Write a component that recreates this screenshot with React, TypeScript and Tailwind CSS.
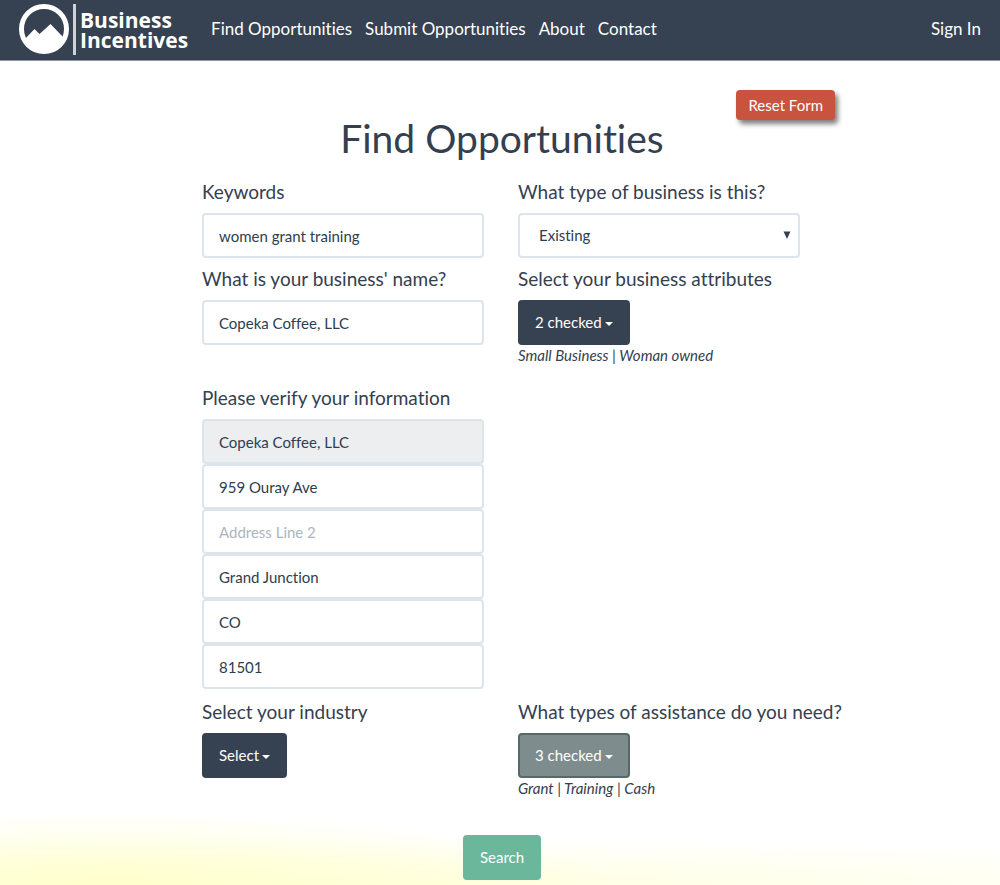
import { useState } from "react";
import type { InputHTMLAttributes, ReactNode } from "react";

const navLinks = ["Find Opportunities", "Submit Opportunities", "About", "Contact"];

const verifyFields = [
  { name: "Address Line 1", value: "959 Ouray Ave" },
  { name: "Address Line 2", value: "" },
  { name: "City", value: "Grand Junction" },
  { name: "State", value: "CO" },
  { name: "Zip Code", value: "81501" },
];

const labelClass = "block whitespace-nowrap text-[19px] leading-[22px]";

function TextField(props: InputHTMLAttributes<HTMLInputElement>) {
  return (
    <input
      type="text"
      {...props}
      className="block h-[45px] w-full rounded border-2 border-[#dce4ec] bg-white px-[15px] text-[15px] text-[#2c3e50] placeholder:text-[#acb6c0] read-only:bg-[#eceef0] focus:border-[#344050] focus:outline-none"
    />
  );
}

function Field({ id, label, children }: { id: string; label: string; children: ReactNode }) {
  return (
    <div className="flex flex-col gap-[10px]">
      <label htmlFor={id} className={labelClass}>
        {label}
      </label>
      {children}
    </div>
  );
}

function Caret() {
  return (
    <svg viewBox="0 0 8 4" className="mt-[3px] h-1 w-2 fill-white" aria-hidden="true">
      <path d="M0 0h8L4 4z" />
    </svg>
  );
}

function DropButton({ id, text, active = false }: { id: string; text: string; active?: boolean }) {
  const tone = active ? "border-[#566965] bg-[#7e8c8d]" : "border-[#364151] bg-[#364151]";
  return (
    <button
      id={id}
      type="button"
      aria-haspopup="true"
      className={`flex h-[45px] items-center gap-[3px] self-start rounded border-2 px-[15px] text-[15px] text-white ${tone}`}
    >
      {text}
      <Caret />
    </button>
  );
}

function Logo() {
  return (
    <a href="#" className="flex items-center text-white">
      <svg viewBox="0 0 50 50" className="size-[50px]" aria-hidden="true">
        <circle cx="25" cy="25" r="22.5" fill="none" stroke="currentColor" strokeWidth="5" />
        <path
          d="M5 36 L15.500 25 L20.500 30 L31.500 20 L45 34 A23 23 0 0 1 5 36z"
          fill="currentColor"
        />
      </svg>
      <span className="ml-1 h-[51px] w-[3px] bg-[#ccd1d7]" />
      <span className="ml-1 flex flex-col pt-0.5 font-['Open_Sans',sans-serif] text-[21px] leading-5 font-bold">
        <span>Business</span>
        <span>Incentives</span>
      </span>
    </a>
  );
}

export default function App() {
  const [keywords, setKeywords] = useState("women grant training");
  const [business, setBusiness] = useState("Copeka Coffee, LLC");

  return (
    <div className="min-h-screen bg-white bg-[radial-gradient(ellipse_500px_72px_at_110px_100%,#ffffcc,#ffffcc00),radial-gradient(ellipse_1000px_46px_at_400px_100%,#ffffe0,#ffffe000)] font-['Lato',sans-serif] text-[15px] leading-[21px] text-[#344050] [font-variant-ligatures:none]">
      <header className="flex h-[61px] items-center border-b border-[#8f959c] bg-[#364151] px-[19px] pb-0.5 text-[17px] text-white">
        <Logo />
        <nav className="ml-[23px] flex flex-1 items-center gap-[13px] pb-0.5">
          {navLinks.map((link) => (
            <a key={link} href="#" className="whitespace-nowrap">
              {link}
            </a>
          ))}
          <a href="#" className="ml-auto whitespace-nowrap">
            Sign In
          </a>
        </nav>
      </header>

      <main className="mx-auto max-w-[670px] pt-[29px] pb-1">
        <form onSubmit={(e) => e.preventDefault()}>
          <div className="flex justify-end">
            <button
              type="reset"
              className="h-[30px] rounded bg-[#c8533f] px-3 text-[15px] text-white shadow-[3px_4px_5px_#00000080]"
            >
              Reset Form
            </button>
          </div>
          <h1 className="pl-1 text-center text-[39px] leading-[36px]">Find Opportunities</h1>

          <div className="mt-[25px] grid grid-cols-2 gap-x-[34px] gap-y-[10px] pr-[35px] pl-[37px]">
            <Field id="keywords" label="Keywords">
              <TextField id="keywords" value={keywords} onChange={(e) => setKeywords(e.target.value)} />
            </Field>
            <Field id="type" label="What type of business is this?">
              <div className="relative">
                <select
                  id="type"
                  className="h-[45px] w-full appearance-none rounded border-2 border-[#dce4ec] bg-white px-[19px] text-[15px] text-[#2c3e50]"
                >
                  <option>Existing</option>
                  <option>New</option>
                </select>
                <svg
                  viewBox="0 0 8 8"
                  className="pointer-events-none absolute top-[18px] right-[9px] size-2 fill-[#344050]"
                  aria-hidden="true"
                >
                  <path d="M.5.500h7L4 8z" />
                </svg>
              </div>
            </Field>

            <Field id="name" label="What is your business' name?">
              <TextField id="name" value={business} onChange={(e) => setBusiness(e.target.value)} />
            </Field>
            <div>
              <Field id="attributes" label="Select your business attributes">
                <DropButton id="attributes" text="2 checked" />
              </Field>
              <p className="italic">Small Business | Woman owned</p>
            </div>

            <fieldset className="mt-[11px] mb-0.5">
              <legend className={`${labelClass} mb-[10px]`}>Please verify your information</legend>
              <TextField aria-label="Business name" value={business} readOnly />
              {verifyFields.map((f) => (
                <TextField key={f.name} aria-label={f.name} placeholder={f.name} defaultValue={f.value} />
              ))}
            </fieldset>
            <div />

            <Field id="industry" label="Select your industry">
              <DropButton id="industry" text="Select" />
            </Field>
            <div>
              <Field id="assistance" label="What types of assistance do you need?">
                <DropButton id="assistance" text="3 checked" active />
              </Field>
              <p className="italic">Grant | Training | Cash</p>
            </div>
          </div>

          <div className="mt-9 flex justify-center pl-1">
            <button type="submit" className="h-[45px] rounded bg-[#6bb79c] px-[17px] text-[15px] text-white">
              Search
            </button>
          </div>
        </form>
      </main>
    </div>
  );
}
